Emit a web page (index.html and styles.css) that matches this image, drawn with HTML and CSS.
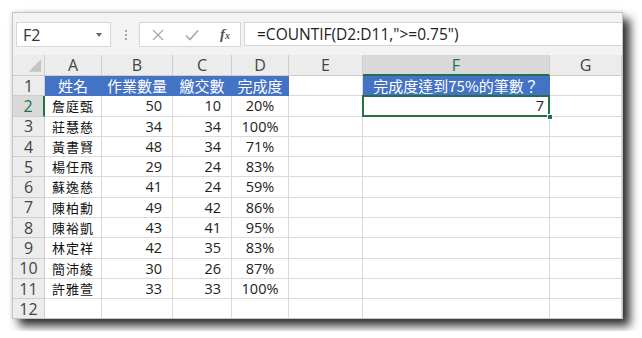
FILE: index.html
```html
<!DOCTYPE html>
<html lang="zh-Hant">
<head>
    <meta charset="UTF-8">
    <title>COUNTIF</title>
    <link rel="stylesheet" href="styles.css">
</head>
<body>
    <div class="frame">
        <div class="window">
            <div class="toolbar">
                <div class="namebox">
                    <span>F2</span>
                    <span class="caret"></span>
                </div>
                <div class="grip"><i></i><i></i><i></i></div>
                <div class="btns">
                    <svg width="12" height="12" viewBox="0 0 12 12"><path d="M1 1L11 11M11 1L1 11" stroke="#a8a8a8" stroke-width="1.3" fill="none"/></svg>
                    <svg width="14" height="12" viewBox="0 0 14 12"><path d="M1 6.5L5 10.5L13 1.5" stroke="#a8a8a8" stroke-width="1.6" fill="none"/></svg>
                    <span class="fx">f<small>x</small></span>
                </div>
                <div class="formula">=COUNTIF(D2:D11,"&gt;=0.75")</div>
            </div>

            <div class="sheet">
                <div class="ch corner"><svg width="32" height="21" viewBox="0 0 32 21"><polygon points="29,4 29,17 16,17" fill="#c5c5c5"/></svg></div>
                <div class="ch">A</div>
                <div class="ch">B</div>
                <div class="ch">C</div>
                <div class="ch">D</div>
                <div class="ch">E</div>
                <div class="ch sel">F</div>
                <div class="ch">G</div>

                <div class="rh">1</div>
                <div class="c hd">姓名</div>
                <div class="c hd">作業數量</div>
                <div class="c hd">繳交數</div>
                <div class="c hd">完成度</div>
                <div class="c"></div>
                <div class="c hd">完成度達到75%的筆數？</div>
                <div class="c"></div>

                <div class="rh sel">2</div>
                <div class="c name">詹庭甄</div>
                <div class="c num">50</div>
                <div class="c num">10</div>
                <div class="c pct">20%</div>
                <div class="c"></div>
                <div class="c result">7<span class="handle"></span></div>
                <div class="c"></div>

                <div class="rh">3</div>
                <div class="c name">莊慧慈</div>
                <div class="c num">34</div>
                <div class="c num">34</div>
                <div class="c pct">100%</div>
                <div class="c"></div><div class="c"></div><div class="c"></div>

                <div class="rh">4</div>
                <div class="c name">黃書賢</div>
                <div class="c num">48</div>
                <div class="c num">34</div>
                <div class="c pct">71%</div>
                <div class="c"></div><div class="c"></div><div class="c"></div>

                <div class="rh">5</div>
                <div class="c name">楊任飛</div>
                <div class="c num">29</div>
                <div class="c num">24</div>
                <div class="c pct">83%</div>
                <div class="c"></div><div class="c"></div><div class="c"></div>

                <div class="rh">6</div>
                <div class="c name">蘇逸慈</div>
                <div class="c num">41</div>
                <div class="c num">24</div>
                <div class="c pct">59%</div>
                <div class="c"></div><div class="c"></div><div class="c"></div>

                <div class="rh">7</div>
                <div class="c name">陳柏勳</div>
                <div class="c num">49</div>
                <div class="c num">42</div>
                <div class="c pct">86%</div>
                <div class="c"></div><div class="c"></div><div class="c"></div>

                <div class="rh">8</div>
                <div class="c name">陳裕凱</div>
                <div class="c num">43</div>
                <div class="c num">41</div>
                <div class="c pct">95%</div>
                <div class="c"></div><div class="c"></div><div class="c"></div>

                <div class="rh">9</div>
                <div class="c name">林定祥</div>
                <div class="c num">42</div>
                <div class="c num">35</div>
                <div class="c pct">83%</div>
                <div class="c"></div><div class="c"></div><div class="c"></div>

                <div class="rh">10</div>
                <div class="c name">簡沛綾</div>
                <div class="c num">30</div>
                <div class="c num">26</div>
                <div class="c pct">87%</div>
                <div class="c"></div><div class="c"></div><div class="c"></div>

                <div class="rh">11</div>
                <div class="c name">許雅萱</div>
                <div class="c num">33</div>
                <div class="c num">33</div>
                <div class="c pct">100%</div>
                <div class="c"></div><div class="c"></div><div class="c"></div>

                <div class="rh">12</div>
                <div class="c"></div><div class="c"></div><div class="c"></div><div class="c"></div>
                <div class="c"></div><div class="c"></div><div class="c"></div>
            </div>
        </div>
    </div>
</body>
</html>
```

FILE: styles.css
```css
:root {
    --toolbar-bg: #f3f3f3;
    --header-bg: #ececec;
    --header-sel: #d9d9d9;
    --header-line: #cdcdcd;
    --grid-line: #dadada;
    --excel-green: #217346;
    --title-blue: #4472c4;
    --text-color: #222;
}

* {
    margin: 0;
    padding: 0;
    box-sizing: border-box;
}

body {
    background-color: #fff;
    font-family: "Open Sans", "Noto Sans CJK TC", sans-serif;
    color: var(--text-color);
}

.frame {
    padding: 12px;
}

.window {
    width: 611px;
    height: 307px;
    border: 1px solid #c4c4c4;
    background-color: #fff;
    overflow: hidden;
    box-shadow: 7px 7px 9px rgba(0,0,0,0.8), 0 0 5px rgba(0,0,0,0.12);
}

/* formula bar */
.toolbar {
    height: 42px;
    background-color: var(--toolbar-bg);
    display: flex;
    align-items: flex-start;
    padding: 9px 0 0 3px;
}

.namebox {
    width: 95px;
    height: 25px;
    background-color: #fff;
    border: 1px solid #d6d6d6;
    display: flex;
    align-items: center;
    justify-content: space-between;
    padding: 0 8px 0 6px;
    font-size: 16px;
    color: #333;
}

.caret {
    width: 0;
    height: 0;
    border-left: 3.5px solid transparent;
    border-right: 3.5px solid transparent;
    border-top: 4px solid #666;
}

.grip {
    width: 2px;
    margin: 8px 12px 0 14px;
    display: flex;
    flex-direction: column;
    gap: 2px;
}

.grip i {
    display: block;
    width: 2px;
    height: 2px;
    background-color: #a6a6a6;
}

.btns {
    width: 102px;
    height: 25px;
    background-color: #fff;
    border: 1px solid #d6d6d6;
    display: flex;
    align-items: center;
    padding: 0 0 0 12px;
    gap: 21px;
}

.fx {
    font-family: "Liberation Serif", serif;
    font-style: italic;
    font-weight: bold;
    font-size: 15px;
    color: #555;
}

.fx small {
    font-size: 10px;
}

.formula {
    flex: 1;
    height: 24px;
    margin-left: 3px;
    background-color: #fff;
    border: 1px solid #d6d6d6;
    border-right: none;
    padding-left: 12px;
    line-height: 22px;
    font-size: 15.5px;
    color: #222;
    white-space: nowrap;
}

/* worksheet */
.sheet {
    display: grid;
    grid-template-columns: 32px 57px 71px 59px 57px 74px 187px 1fr;
    grid-template-rows: 21px repeat(12, 20.3px);
}

.ch,
.rh {
    background-color: var(--header-bg);
    border-right: 1px solid var(--header-line);
    border-bottom: 1px solid var(--header-line);
    color: #444;
    font-size: 16px;
    display: flex;
    align-items: center;
    justify-content: center;
}

.corner {
    align-items: stretch;
    justify-content: stretch;
}

.ch.sel {
    background-color: var(--header-sel);
    color: var(--excel-green);
    border-bottom: 2px solid var(--excel-green);
}

.rh.sel {
    background-color: var(--header-sel);
    color: var(--excel-green);
    border-right: 2px solid var(--excel-green);
}

.c {
    border-right: 1px solid var(--grid-line);
    border-bottom: 1px solid var(--grid-line);
    font-size: 14.5px;
    line-height: 19px;
    white-space: nowrap;
    overflow: hidden;
}

.c.hd {
    background-color: var(--title-blue);
    border-color: var(--title-blue);
    color: #fff;
    text-align: center;
    font-family: "Noto Sans CJK TC", sans-serif;
    font-size: 15px;
    overflow: visible;
}

.name {
    text-align: center;
    font-family: "Noto Sans CJK TC", sans-serif;
    font-size: 13px;
    letter-spacing: 1px;
    color: #111;
}

.num {
    text-align: right;
    padding-right: 10px;
}

.pct {
    text-align: center;
}

.result {
    position: relative;
    text-align: right;
    padding-right: 5px;
    overflow: visible;
}

.result::after {
    content: "";
    position: absolute;
    top: -1px;
    left: -1px;
    right: -1px;
    bottom: -1px;
    border: 2px solid var(--excel-green);
}

.handle {
    position: absolute;
    right: -4px;
    bottom: -4px;
    width: 6px;
    height: 6px;
    background-color: var(--excel-green);
    border: 1px solid #fff;
    z-index: 2;
}
```
